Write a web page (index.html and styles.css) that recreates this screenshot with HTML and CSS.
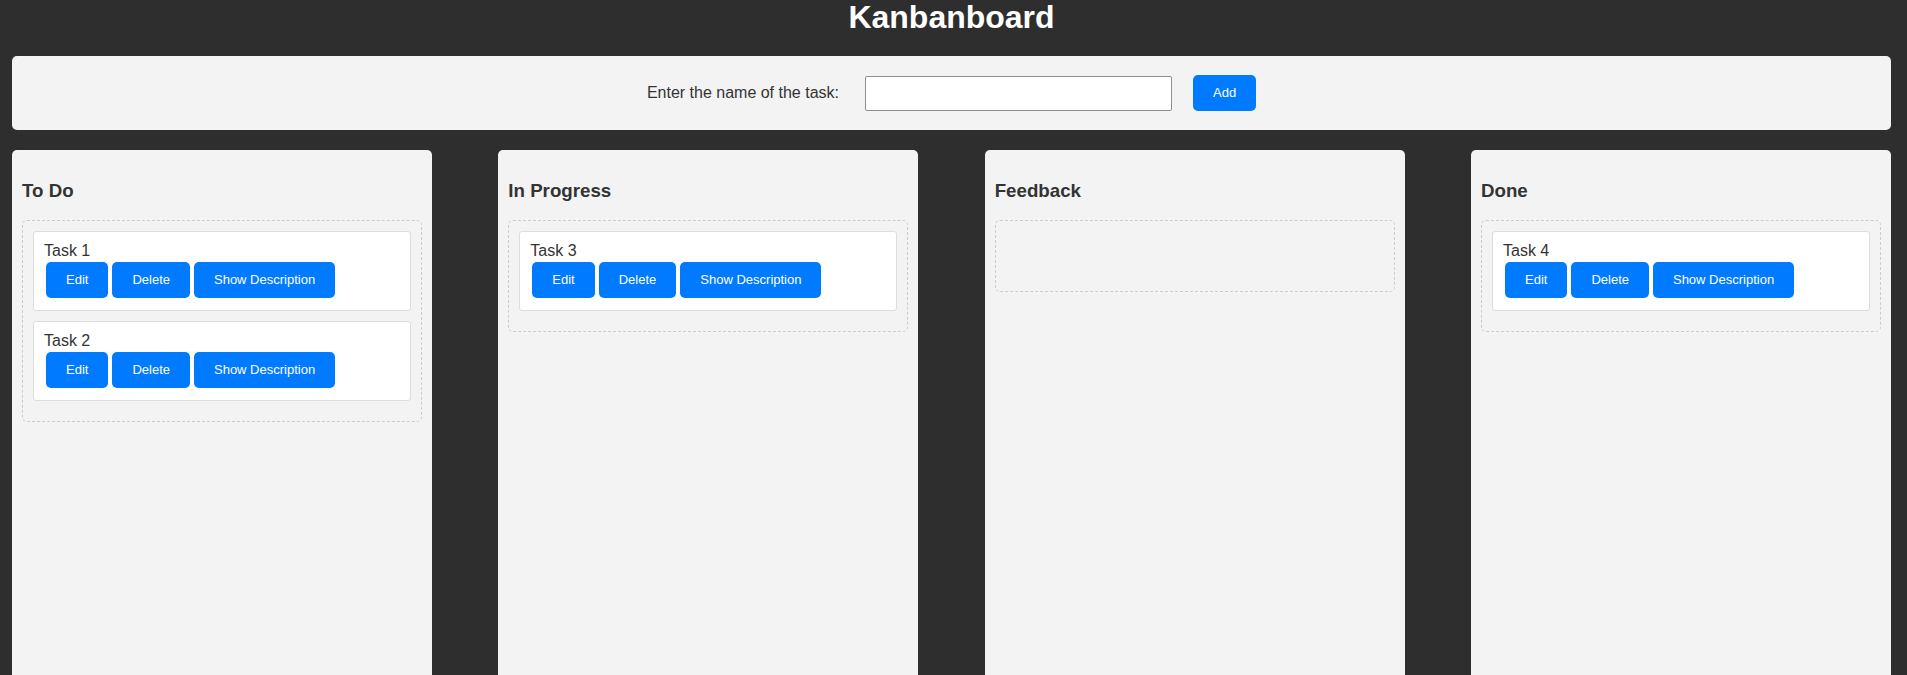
FILE: index.html
```html
<!DOCTYPE html>
<html lang="en">
<head>
<meta charset="utf-8">
<title>Kanbanboard</title>
<link rel="stylesheet" href="styles.css">
</head>
<body>
<div class="app">
  <h1 class="title">Kanbanboard</h1>
  <div class="form-panel">
    <label class="form-label" for="taskName">Enter the name of the task:</label>
    <input class="form-input" id="taskName" type="text">
    <button class="btn">Add</button>
  </div>
  <div class="board">
    <div class="column">
      <h3 class="column-title">To Do</h3>
      <div class="dropzone">
        <div class="task">
          <div class="task-name">Task 1</div>
          <div class="task-actions"><button class="btn">Edit</button><button class="btn">Delete</button><button class="btn">Show Description</button></div>
        </div>
        <div class="task">
          <div class="task-name">Task 2</div>
          <div class="task-actions"><button class="btn">Edit</button><button class="btn">Delete</button><button class="btn">Show Description</button></div>
        </div>
      </div>
    </div>
    <div class="column">
      <h3 class="column-title">In Progress</h3>
      <div class="dropzone">
        <div class="task">
          <div class="task-name">Task 3</div>
          <div class="task-actions"><button class="btn">Edit</button><button class="btn">Delete</button><button class="btn">Show Description</button></div>
        </div>
      </div>
    </div>
    <div class="column">
      <h3 class="column-title">Feedback</h3>
      <div class="dropzone"></div>
    </div>
    <div class="column">
      <h3 class="column-title">Done</h3>
      <div class="dropzone">
        <div class="task">
          <div class="task-name">Task 4</div>
          <div class="task-actions"><button class="btn">Edit</button><button class="btn">Delete</button><button class="btn">Show Description</button></div>
        </div>
      </div>
    </div>
  </div>
</div>
</body>
</html>
```
FILE: styles.css
```css
html, body {
  margin: 0;
  height: 100%;
  overflow: hidden;
}
body {
  background: #2e2e2e;
  font-family: "Liberation Sans", Arial, sans-serif;
  color: #333;
}
.app {
  padding: 0 16px 0 12px;
}
.title {
  margin: 0 0 22px;
  text-align: center;
  color: #fff;
  font-size: 32px;
  line-height: 34px;
  font-weight: bold;
}
.form-panel {
  background: #f3f3f3;
  border-radius: 5px;
  height: 74px;
  display: flex;
  align-items: center;
  justify-content: center;
  margin-bottom: 20px;
}
.form-label {
  font-size: 16px;
  margin-right: 26px;
}
.form-input {
  box-sizing: border-box;
  width: 307px;
  height: 35px;
  border: 1px solid #8f8f8f;
  border-radius: 2px;
  background: #fff;
  margin: 0 21px 0 0;
  padding: 0 6px;
  font: 16px "Liberation Sans", Arial, sans-serif;
}
.btn {
  margin: 2px;
  padding: 10px 20px;
  border: 0;
  border-radius: 5px;
  background: #007bff;
  color: #fff;
  font: 13px/16px "Liberation Sans", Arial, sans-serif;
  cursor: pointer;
}
.form-panel .btn {
  margin: 0;
}
.board {
  display: flex;
  justify-content: space-between;
}
.column {
  box-sizing: border-box;
  width: 420px;
  min-height: 620px;
  padding: 10px;
  background: #f3f3f3;
  border-radius: 5px;
}
.column-title {
  margin: 20px 0 18px;
  font-size: 18.72px;
  font-weight: bold;
  color: #333;
}
.dropzone {
  border: 1px dashed #ccc;
  border-radius: 5px;
  padding: 10px;
  min-height: 50px;
}
.task {
  background: #fff;
  border: 1px solid #ddd;
  border-radius: 3px;
  padding: 10px;
  margin-bottom: 10px;
}
.task-name {
  font-size: 16px;
}
.task-actions {
  display: flex;
}
```
